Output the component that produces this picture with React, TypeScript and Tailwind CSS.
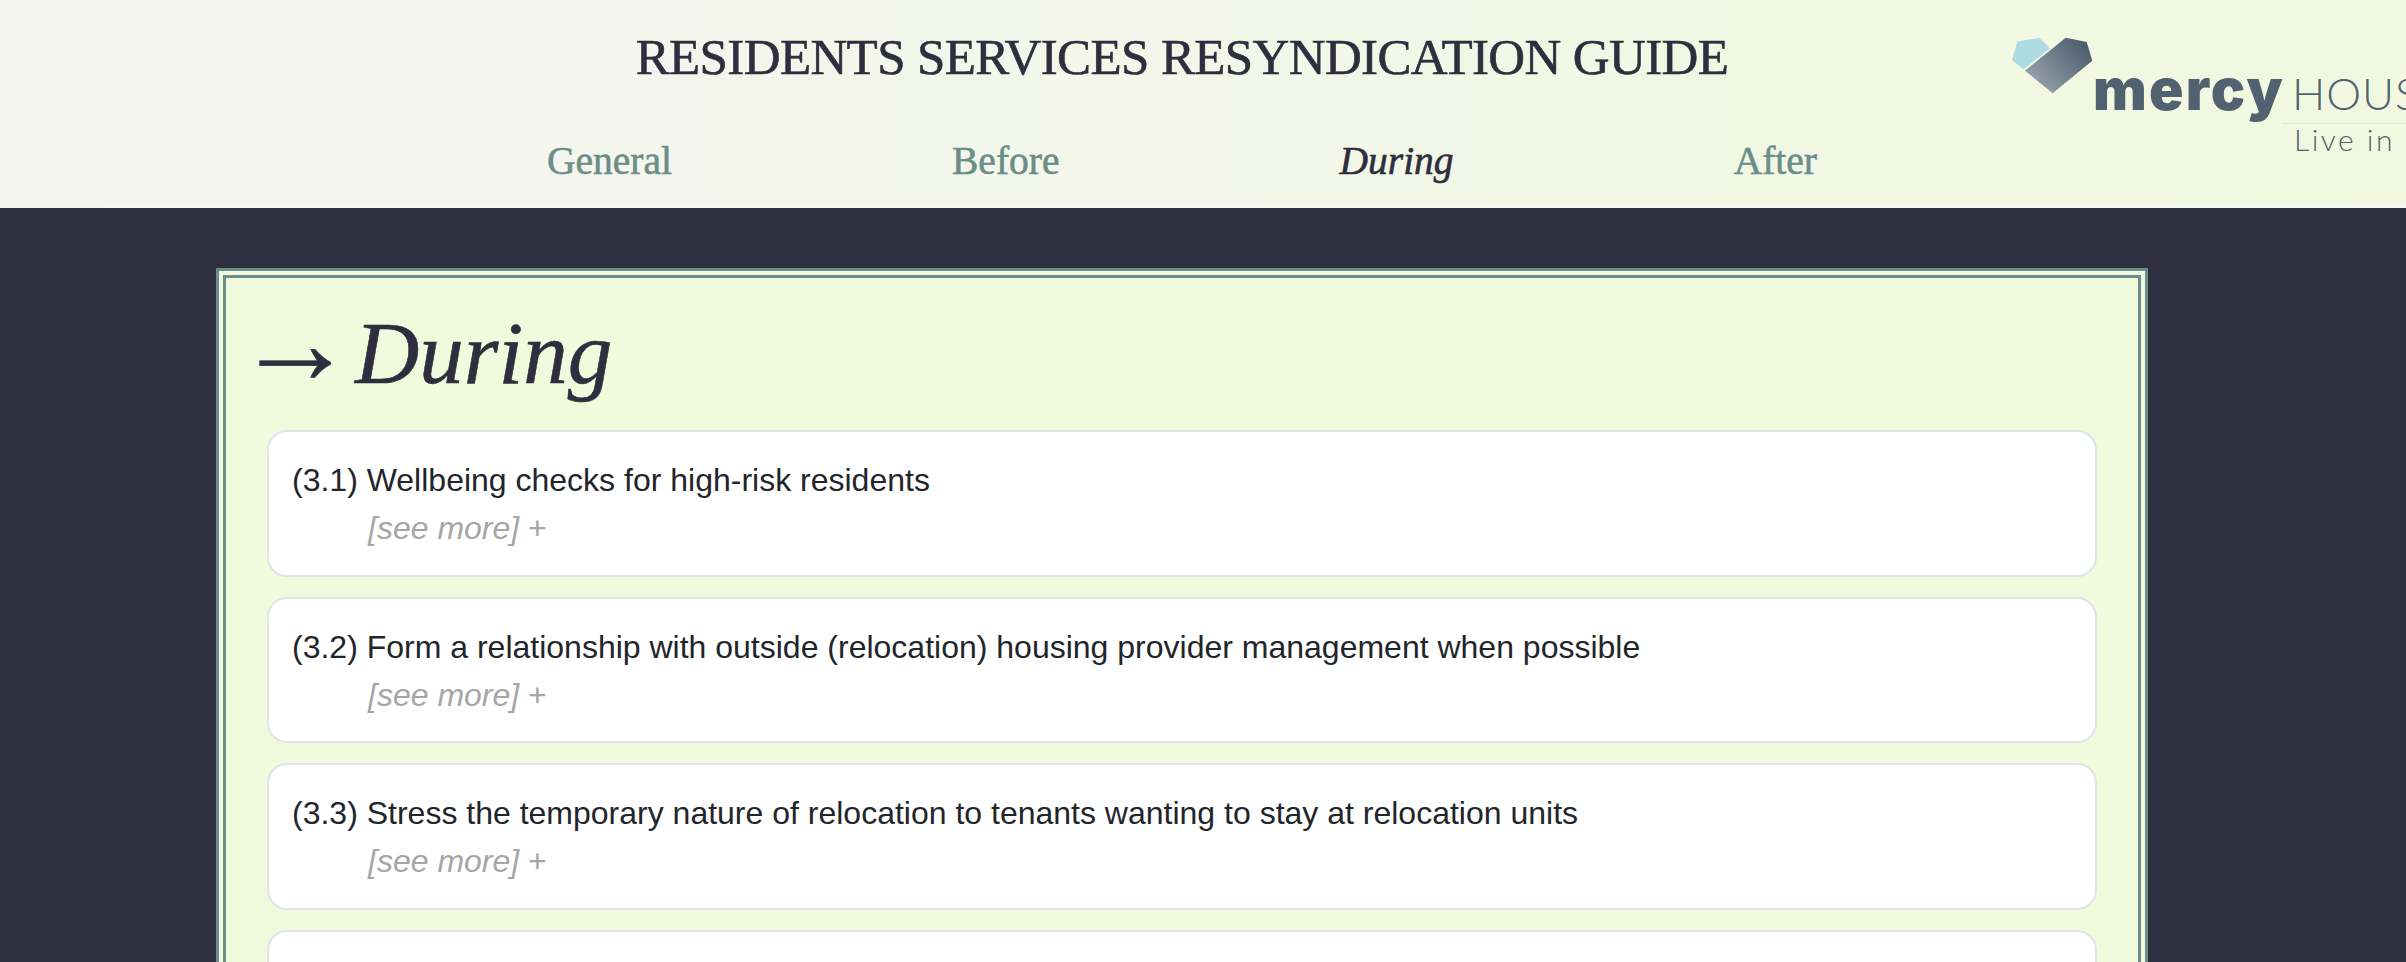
import React from 'react';

const items = [
  '(3.1) Wellbeing checks for high-risk residents',
  '(3.2) Form a relationship with outside (relocation) housing provider management when possible',
  '(3.3) Stress the temporary nature of relocation to tenants wanting to stay at relocation units',
];

const Logo: React.FC = () => (
  <div className="absolute right-0 top-0 flex h-[204px] w-[446px] flex-col overflow-hidden pl-[133px] pt-[60px] text-[#51616f]">
    <svg className="absolute left-0 top-0" width="140" height="100" viewBox="0 0 420 300">
      <defs>
        <linearGradient id="heart" x1="0" y1="1" x2="1" y2="0.25">
          <stop offset="0" stopColor="#a3afb9" />
          <stop offset="1" stopColor="#4d5d6b" />
        </linearGradient>
      </defs>
      <polygon points="172,125 237,113 270,145 190,208 156,180" fill="#aedae2" />
      <polygon points="317,113 380,126 397,182 278,280 195,212" fill="url(#heart)" />
    </svg>
    <div className="flex items-baseline gap-[7px] whitespace-nowrap leading-[60px]">
      <span className="font-['Inter',sans-serif] text-[57px] font-black tracking-[2.2px]">mercy</span>
      <span className="font-['Lato',sans-serif] text-[44px] font-light tracking-[1px]">HOUSING</span>
    </div>
    <div className="ml-[189px] h-px w-[200px] bg-[#d3e8e8]" />
    <span className="-mt-[3px] ml-[201px] whitespace-nowrap font-['Lato',sans-serif] text-[30px] font-light leading-[36px] tracking-[2.5px]">Live in</span>
  </div>
);

const Card: React.FC<{ text?: string }> = ({ text }) => (
  <div className="h-[146.67px] rounded-[20px] border-2 border-[#e0e3e8] bg-white pl-[23px] pt-[24px] font-['Liberation_Sans',sans-serif] text-[32px] leading-[48px]">
    {text && (
      <>
        <p className="text-[#22252b]">{text}</p>
        <p className="ml-[76px] text-[#a6a6a6]">
          <span className="italic">[see more]</span> +
        </p>
      </>
    )}
  </div>
);

const App: React.FC = () => {
  return (
    <div className="relative h-[962px] overflow-hidden bg-[#2f2e3e]">
      <header className="relative h-[208px] border-b-4 border-[#f5f7f0] bg-gradient-to-r from-[#f5f5f2] to-[#f1f8df]">
        <div className="ml-[407px] w-[1550px] font-['Liberation_Serif',serif] [-webkit-text-stroke:0.6px]">
          <h1 className="pt-[29px] text-center text-[51px] leading-[56px] tracking-[-0.63px] text-[#2f2e3e]">RESIDENTS SERVICES RESYNDICATION GUIDE</h1>
          <nav className="mt-[53px] flex justify-around text-[39.5px] leading-[46px] text-[#6b8e8a]">
            <a>General</a>
            <a>Before</a>
            <a className="italic text-[#2f2e3e]">During</a>
            <a>After</a>
          </nav>
        </div>
        <Logo />
      </header>

      <main className="ml-[216px] mt-[60px] w-[1932px] border-[10px] border-double border-[#6b8e8a] bg-[#f0fadd] px-[41px] pb-[40px]">
        <h2 className="-ml-[32px] flex h-[122px] items-baseline pt-[15px] font-['Liberation_Serif',serif] text-[89px] italic leading-[100px] text-[#2f2e3e] [-webkit-text-stroke:0.6px]">
          <span className="text-[120px] not-italic leading-[100px]">→</span>
          <span>During</span>
        </h2>
        <div className="mt-[30px] flex flex-col gap-[20px]">
          {items.map((text) => (
            <Card key={text} text={text} />
          ))}
          <Card />
        </div>
      </main>
    </div>
  );
};

export default App;
